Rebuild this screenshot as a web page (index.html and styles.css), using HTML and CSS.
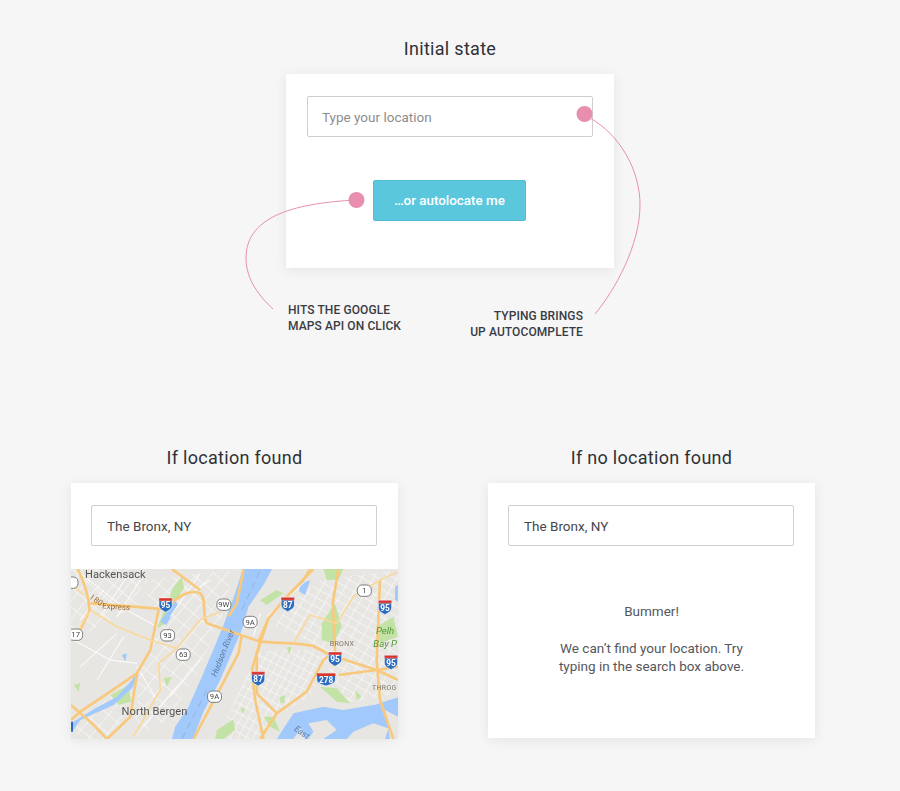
FILE: index.html
```html
<!DOCTYPE html>
<html lang="en">
<head>
  <meta charset="UTF-8">
  <meta name="viewport" content="width=device-width, initial-scale=1.0">
  <title>Location states</title>
  <link rel="stylesheet" href="styles.css">
</head>
<body>
  <section class="initial">
    <h2 class="state-title">Initial state</h2>
    <div class="card card-initial">
      <div class="location-box placeholder">Type your location</div>
      <button class="autolocate">…or autolocate me</button>
    </div>

    <svg class="callouts" width="900" height="350" viewBox="0 0 900 350">
      <path d="M356 200 C 300 203 246 214 246 258 C 246 280 260 297 273 309" />
      <path d="M590 118 C 620 135 640 170 640 205 C 640 245 615 290 595 314" />
      <circle cx="356.500" cy="200" r="8" />
      <circle cx="584.500" cy="114" r="8" />
    </svg>
    <p class="note note-left">Hits the Google<br>Maps API on click</p>
    <p class="note note-right">Typing brings<br>up autocomplete</p>
  </section>

  <section class="results">
    <div class="result">
      <h2 class="state-title">If location found</h2>
      <div class="card card-result">
        <div class="location-box">The Bronx, NY</div>
        <svg class="map" viewBox="32 27 982 510" preserveAspectRatio="none">
          <defs>
            <g id="shield">
              <path d="M-20 -20 H20 V2 C20 14 8 18 0 23 C-8 18 -20 14 -20 2 Z" fill="#2b6bc0" stroke="#fff" stroke-width="2" />
              <path d="M-20 -20 H20 V-11 H-20 Z" fill="#d9352f" stroke="#fff" stroke-width="1" />
            </g>
            <rect id="state" x="-21" y="-17" width="42" height="34" rx="14" fill="#fff" stroke="#666" stroke-width="2.500" />
            <pattern id="grid-a" width="26" height="20" patternUnits="userSpaceOnUse" patternTransform="rotate(-62)">
              <path d="M0 0 H26 M0 0 V20" stroke="#fff" stroke-width="3" fill="none" />
            </pattern>
            <pattern id="grid-b" width="30" height="24" patternUnits="userSpaceOnUse" patternTransform="rotate(30)">
              <path d="M0 0 H30 M0 0 V24" stroke="#fff" stroke-width="3" fill="none" />
            </pattern>
            <pattern id="grid-c" width="44" height="34" patternUnits="userSpaceOnUse" patternTransform="rotate(-50)">
              <path d="M0 0 H44 M0 0 V34" stroke="#fff" stroke-width="3" fill="none" />
            </pattern>
          </defs>

          <rect x="32" y="27" width="982" height="510" fill="#e8e6e2" />

          <!-- street grids -->
          <path d="M470 537 L590 280 L640 270 L760 270 L790 300 L760 400 L650 470 L600 537 Z" fill="url(#grid-a)" />
          <path d="M640 200 L700 120 L780 60 L1014 30 V400 L860 430 L790 300 L760 250 Z" fill="url(#grid-b)" />
          <path d="M250 60 L520 30 L480 190 L400 360 L320 480 L220 530 L240 330 L290 200 Z" fill="url(#grid-c)" />
          <path d="M32 27 H250 L230 140 L60 230 L32 200 Z" fill="url(#grid-c)" />
          <path d="M40 500 L150 410 L230 340 L210 470 L140 537 H60 Z" fill="url(#grid-c)" />

          <!-- parks -->
          <g fill="#c3e3a6">
            <path d="M340 80 L365 50 L372 85 L345 125 L318 190 L290 205 Z" />
            <path d="M150 405 L205 375 L212 425 L175 435 Z" />
            <path d="M470 510 L520 478 L525 510 L490 537 L465 537 Z" />
            <path d="M785 190 L825 130 L845 200 L820 250 L785 240 Z" />
            <path d="M790 27 H850 L835 60 L800 60 Z" />
            <path d="M600 120 L650 90 L670 100 L620 135 Z" />
            <path d="M950 200 L1000 170 L1014 230 L960 250 Z" />
            <path d="M780 380 L830 385 L870 430 L830 425 Z" />
            <path d="M40 375 L60 370 L55 395 Z" />
            <path d="M680 262 L695 260 L688 285 Z" />
            <path d="M660 410 L675 405 L672 430 L660 428 Z" />
            <path d="M885 390 L905 410 L890 420 Z" />
            <path d="M540 445 L555 445 L550 462 Z" />
            <path d="M310 355 L335 350 L320 380 Z" />
            <path d="M610 470 L640 470 L660 515 L630 500 Z" />
          </g>

          <!-- water -->
          <g fill="#a2c9fb">
            <path d="M548 27 H636 L610 75 L565 140 L545 210 L510 290 L480 360 L430 455 L398 537 H335 L345 500 L385 440 L425 350 L455 280 L490 195 L525 100 Z" />
            <path d="M1014 412 L945 434 L850 450 L790 440 L700 460 L650 537 H1014 Z" />
            <path d="M32 490 L100 448 L170 410 L215 360 L225 340 L235 345 L215 385 L160 435 L105 460 L60 480 L40 510 Z" />
            <path d="M718 65 L750 62 L735 105 L718 95 Z" />
            <path d="M185 285 L200 280 L195 305 Z" />
            <path d="M300 185 L345 120 L352 135 L318 195 Z" />
            <path d="M1005 80 L1014 75 V125 L1005 120 Z" />
          </g>
          <g fill="#e8e6e2">
            <path d="M745 490 L800 480 L830 510 L790 537 H745 L760 515 Z" />
            <path d="M880 515 L940 490 L985 505 L975 537 H860 Z" />
            <path d="M700 537 L722 505 L735 537 Z" />
            <path d="M990 537 L975 450 L1014 470 V537 Z" />
          </g>
          <path d="M365 537 L440 390 M465 335 L515 235 M545 150 L598 35" class="ferry" />

          <!-- minor streets -->
          <g class="streets">
            <path d="M60 40 L200 150 L290 200 M130 90 L60 180 M200 50 L120 170 M240 60 L170 170 M40 240 L150 300 L230 310" />
            <path d="M110 360 L190 230 M60 320 L170 220 M230 320 L290 420 M330 410 L420 300 M250 500 L350 380" />
            <path d="M620 170 L740 60 M580 230 L600 160 M450 60 L390 100 M420 40 L330 170" />
          </g>

          <!-- highways -->
          <g class="roads">
            <path d="M52 27 C70 60 85 110 88 150 L60 210" />
            <path d="M90 130 L220 140 L315 148 C350 110 390 85 420 100 C440 115 425 170 440 190 L600 245 C660 250 720 248 760 258 L810 285 L950 330 L1014 360" />
            <path d="M295 150 L270 270 L230 340 L150 395 L60 455 L32 480" />
            <path d="M32 435 L95 490 L140 537" />
            <path d="M230 340 L210 470 L140 537" />
            <path d="M600 245 L575 330 L585 420 L610 537" />
            <path d="M550 30 L530 130 L505 170 M545 225 L535 280 L480 385 L400 537" />
            <path d="M595 245 L625 175 L680 110 L760 27" />
            <path d="M625 175 L590 280 L590 400 L650 460 L740 395 L790 300 L810 285" />
            <path d="M835 345 L950 330 L1014 320" />
            <path d="M835 27 L818 130 L825 280 L820 320" />
            <path d="M960 60 L950 300 L960 420 L1000 537" />
            <path d="M650 460 L600 537" />
            <path d="M680 110 L730 60 L750 27" />
            <path d="M335 27 L420 90" />
          </g>
          <g class="roads-thin">
            <path d="M90 150 L170 200 L270 240 L350 265 L420 180 L480 155" />
            <path d="M350 265 L295 310 L300 390 L220 530" />
            <path d="M85 155 L55 210 L40 240" />
            <path d="M32 70 L70 105" />
            <path d="M1014 35 L960 60 L880 110 L830 190 L750 165 L700 250" />
          </g>

          <!-- shields -->
          <use href="#shield" x="316" y="134" />
          <use href="#shield" x="683" y="132" />
          <use href="#shield" x="975" y="141" />
          <use href="#shield" x="825" y="296" />
          <use href="#shield" x="993" y="306" />
          <use href="#shield" x="594" y="355" />
          <g><path d="M770 342 H826 V360 C826 370 810 374 798 378 C786 374 770 370 770 360 Z" fill="#2b6bc0" stroke="#fff" stroke-width="2" /><rect x="770" y="340" width="56" height="8" fill="#d9352f" /></g>
          <path d="M32 485 H38 V515 H32 Z" fill="#2b6bc0" />
          <use href="#state" x="491" y="134" />
          <use href="#state" x="913" y="92" />
          <use href="#state" x="570" y="186" />
          <use href="#state" x="322" y="226" />
          <use href="#state" x="369" y="284" />
          <use href="#state" x="46" y="224" />
          <use href="#state" x="463" y="410" />
          <use href="#state" x="32" y="68" />

          <g class="shield-num">
            <text x="316" y="145">95</text>
            <text x="683" y="143">87</text>
            <text x="975" y="152">95</text>
            <text x="825" y="306">95</text>
            <text x="993" y="317">95</text>
            <text x="594" y="366">87</text>
            <text x="798" y="368">278</text>
          </g>
          <g class="state-num">
            <text x="491" y="142">9W</text>
            <text x="913" y="100">1</text>
            <text x="570" y="194">9A</text>
            <text x="322" y="234">93</text>
            <text x="369" y="292">63</text>
            <text x="46" y="232">17</text>
            <text x="463" y="418">9A</text>
          </g>

          <text x="74" y="54" class="town">Hackensack</text>
          <text x="184" y="465" class="town">North Bergen</text>
          <text x="88" y="116" class="express" transform="rotate(35 88 116)">I 80</text>
          <text x="125" y="145" class="express" transform="rotate(4 125 145)">Express</text>
          <text x="809" y="259" class="hood">BRONX</text>
          <text x="936" y="390" class="hood">THROG</text>
          <text x="948" y="222" class="park-name">Pelh</text>
          <text x="940" y="262" class="park-name">Bay P</text>
          <text x="468" y="352" class="river" transform="rotate(-68 468 352)">Hudson River</text>
          <text x="700" y="510" class="river" transform="rotate(35 700 510)">East</text>
        </svg>
      </div>
    </div>

    <div class="result">
      <h2 class="state-title">If no location found</h2>
      <div class="card card-result">
        <div class="location-box">The Bronx, NY</div>
        <div class="bummer">
          <p>Bummer!</p>
          <p>We can’t find your location. Try<br>typing in the search box above.</p>
        </div>
      </div>
    </div>
  </section>
</body>
</html>
```

FILE: styles.css
```css
html, body {
  height: 100%;
}

body {
  background: #f6f6f6;
  color: #2f3138;
  font-family: Roboto, Arial, sans-serif;
  margin: 0;
  overflow: hidden;
}

.initial {
  position: relative;
  height: 447px;
  padding-top: 38px;
  box-sizing: border-box;
}

.state-title {
  font-size: 18px;
  font-weight: 400;
  letter-spacing: 0.3px;
  line-height: 22px;
  margin: 0 0 14px;
  text-align: center;
}

.card {
  background: #fff;
  box-shadow: 0 2px 12px rgba(0, 0, 0, 0.08);
  box-sizing: border-box;
  width: 328px;
}

.card-initial {
  height: 194px;
  margin: 0 auto;
  padding: 22px 21px;
}

.location-box {
  background: #fff;
  border: 1px solid #cfcfd2;
  border-radius: 2px;
  box-sizing: border-box;
  color: #45474d;
  font-size: 13.500px;
  height: 41px;
  line-height: 40px;
  padding-left: 15px;
}

.placeholder {
  color: #8d8d8d;
  padding-left: 14px;
}

.autolocate {
  background: #5bc7dd;
  border: 1px solid #52bdd3;
  border-radius: 2px;
  color: #fff;
  display: block;
  font-family: inherit;
  font-size: 13.400px;
  font-weight: 500;
  height: 41px;
  margin: 43px 0 0 66px;
  padding: 0;
  width: 153px;
}

.callouts {
  left: 0;
  pointer-events: none;
  position: absolute;
  top: 0;
}

.callouts path {
  fill: none;
  stroke: #e88fb0;
  stroke-width: 1;
}

.callouts circle {
  fill: #e88fb0;
}

.note {
  color: #3a3c44;
  font-size: 12px;
  font-weight: 500;
  letter-spacing: 0.1px;
  line-height: 16px;
  margin: 0;
  position: absolute;
  text-transform: uppercase;
}

.note-left {
  left: 288px;
  top: 302px;
}

.note-right {
  right: 317px;
  text-align: right;
  top: 308px;
}

.results {
  display: flex;
  gap: 90px;
  padding-left: 71px;
}

.result {
  width: 327px;
}

.result .card {
  width: 327px;
}

.card-result {
  height: 255px;
  padding-top: 22px;
}

.card-result .location-box {
  margin: 0 21px 0 20px;
}

.map {
  display: block;
  filter: blur(0.3px);
  height: 170px;
  margin-top: 23px;
  width: 327px;
}

.streets path {
  fill: none;
  stroke: #fff;
  stroke-width: 3;
}

.roads path {
  fill: none;
  stroke: #f8c97c;
  stroke-linejoin: round;
  stroke-width: 8;
}

.roads-thin path {
  fill: none;
  stroke: #f9d99b;
  stroke-width: 5;
}

.ferry {
  fill: none;
  stroke: #8ba6c6;
  stroke-dasharray: 22 14;
  stroke-width: 2;
}

.shield-num text {
  fill: #fff;
  font-size: 25px;
  font-weight: 700;
  text-anchor: middle;
}

.state-num text {
  fill: #444;
  font-size: 23px;
  text-anchor: middle;
}

.town {
  fill: #555;
  font-size: 33.500px;
}

.express {
  fill: #9a6a32;
  font-size: 24px;
}

.hood {
  fill: #80786a;
  font-size: 21px;
  letter-spacing: 1px;
}

.park-name {
  fill: #4f9a3a;
  font-size: 29px;
  font-style: italic;
}

.river {
  fill: #5d7fa8;
  font-size: 26px;
  font-style: italic;
}

.bummer {
  color: #55575c;
  font-size: 13.500px;
  line-height: 18px;
  padding-top: 56px;
  text-align: center;
}

.bummer p {
  margin: 0 0 19px;
}
```
